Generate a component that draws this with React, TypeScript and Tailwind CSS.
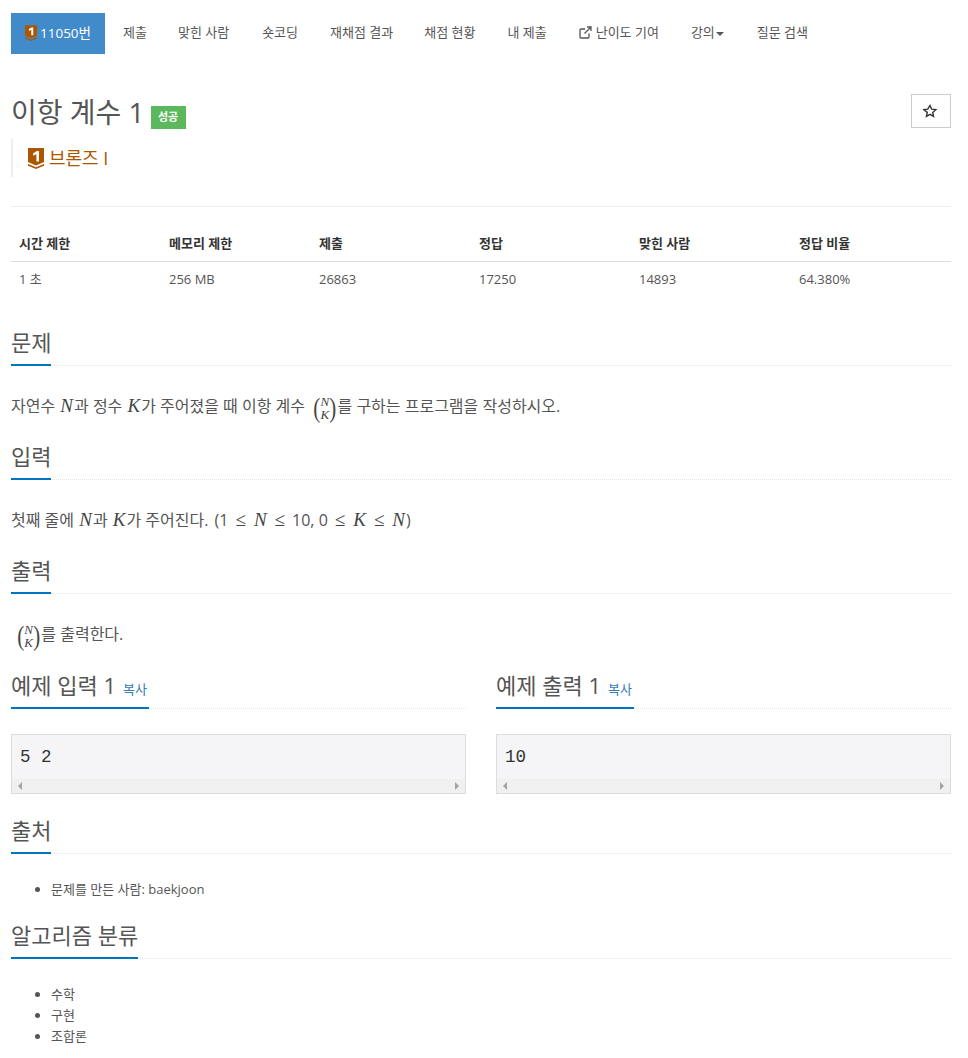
import React from "react";

const Shield = ({ w, h }: { w: number; h: number }) => (
  <svg width={w} height={h} viewBox="0 0 16 21" className="inline-block shrink-0">
    <path d="M0 0H16V14L8 17.6L0 14Z" fill="#ad5600" />
    <path d="M0 16L8 19.2L16 16V17.8L8 21L0 17.8Z" fill="#ad5600" />
    <path d="M5.2 5.2L8.8 3H11V13.6H8.4V6.2L5.2 7.8Z" fill="#fff" />
  </svg>
);

const Section = ({ title, suffix }: { title: string; suffix?: React.ReactNode }) => (
  <div className="border-b border-dotted border-[#e5e5e5] h-[44px] flex items-end">
    <h2 className="text-[22px] leading-[30px] text-[#555] border-b-2 border-[#0076c0] -mb-px pb-[7px] font-normal whitespace-nowrap">
      {title}
      {suffix}
    </h2>
  </div>
);

const I = ({ children }: { children: React.ReactNode }) => (
  <i className="font-['Liberation_Serif',serif] text-[19px] italic text-[#444] mx-[1px]">{children}</i>
);

const Le = () => (
  <span className="font-['Liberation_Serif',serif] text-[19px] text-[#444] mx-[7px]">≤</span>
);

const Binom = () => (
  <span className="inline-flex items-center align-middle font-['Liberation_Serif',serif] text-[#444] ml-[3px]">
    <span className="text-[28px] font-extralight leading-none scale-x-75 -mr-[1px]">(</span>
    <span className="flex flex-col items-center text-[13px] italic leading-[13px]">
      <span>N</span>
      <span>K</span>
    </span>
    <span className="text-[28px] font-extralight leading-none scale-x-75 -ml-[1px]">)</span>
  </span>
);

const Sample = ({ title, value }: { title: string; value: string }) => (
  <div className="flex-1 min-w-0">
    <Section title={title} suffix={<a className="text-[13px] leading-none text-[#337ab7] ml-[7px] pr-[2px]">복사</a>} />
    <div className="mt-[25px] border border-[#ddd] bg-[#f5f5f7] h-[60px] flex flex-col">
      <div className="flex-1 px-2 font-['Liberation_Mono',monospace] text-[17.5px] leading-[44px] text-[#333]">{value}</div>
      <div className="h-[17px] bg-[#f0f0f0] flex items-center justify-between px-[6px]">
        <span className="border-y-[4px] border-r-[4px] border-y-transparent border-r-[#a3a3a3]" />
        <span className="border-y-[4px] border-l-[4px] border-y-transparent border-l-[#a3a3a3]" />
      </div>
    </div>
  </div>
);

export default function App() {
  return (
    <div className="font-['Open_Sans','Noto_Sans_CJK_KR',sans-serif] text-[14px] text-[#555] bg-white pl-[11px] pr-[17px] pt-[13px] h-[1058px] overflow-hidden">
      <nav className="flex items-center h-[41px] text-[13px]">
        <a className="h-full w-[94px] bg-[#428bca] text-white flex items-center justify-center gap-[3px] text-[13.5px] pb-[1px]">
          <Shield w={12} h={16} />
          <span>11050번</span>
        </a>
        <a className="ml-[18px] pb-[2px]">제출</a>
        <a className="ml-[31px] pb-[2px]">맞힌 사람</a>
        <a className="ml-[33px] pb-[2px]">숏코딩</a>
        <a className="ml-[32px] pb-[2px]">재채점 결과</a>
        <a className="ml-[31px] pb-[2px]">채점 현황</a>
        <a className="ml-[32px] pb-[2px]">내 제출</a>
        <a className="ml-[32px] pb-[2px] flex items-center gap-[4px]">
          <svg width="13" height="13" viewBox="0 0 13 13" fill="none" stroke="#555" strokeWidth="1.3">
            <path d="M10 7.5V11a1 1 0 0 1-1 1H2a1 1 0 0 1-1-1V4a1 1 0 0 1 1-1h4" />
            <path d="M5.5 7.5L11.5 1.5M8 1h4v4" />
          </svg>
          난이도 기여
        </a>
        <a className="ml-[32px] pb-[2px] flex items-center">
          강의
          <span className="ml-[1px] mt-[2px] border-x-[4px] border-t-[4px] border-x-transparent border-t-[#555]" />
        </a>
        <a className="ml-[33px] pb-[2px]">질문 검색</a>
      </nav>

      <div className="flex items-start justify-between mt-[40px]">
        <div className="flex items-center h-[34px]">
          <h1 className="text-[28px] leading-[34px] mt-[2px] font-normal text-[#555]">이항 계수 1</h1>
          <span className="ml-[6px] mt-[12px] bg-[#5cb85c] text-white text-[11px] font-bold w-[35px] h-[23px] flex items-center justify-center">성공</span>
        </div>
        <button className="w-[40px] h-[34px] border border-[#ccc] flex items-center justify-center pr-[2px] text-[#333]">
          <svg width="14" height="14" viewBox="0 0 24 24" fill="none" stroke="#333" strokeWidth="2.4">
            <path d="M12 2.5l2.9 6.4 7 .8-5.2 4.7 1.4 6.9-6.1-3.5-6.1 3.5 1.4-6.9L1.1 9.7l7-.8z" />
          </svg>
        </button>
      </div>

      <div className="mt-[11px] h-[38px] border-l-2 border-[#eee] pl-[15px] flex items-center gap-[5px] text-[18px] text-[#ad5600]">
        <Shield w={16} h={21} />
        <span>브론즈 I</span>
      </div>

      <hr className="mt-[29px] border-[#eee]" />

      <table className="mt-[23px] w-full text-[13px] text-[#333] table-fixed">
        <thead>
          <tr className="border-b border-[#ddd] text-left h-[31px]">
            <th className="w-[150px] pl-2 pb-[4px] font-bold">시간 제한</th>
            <th className="w-[150px] pl-2 pb-[4px] font-bold">메모리 제한</th>
            <th className="w-[160px] pl-2 pb-[4px] font-bold">제출</th>
            <th className="w-[160px] pl-2 pb-[4px] font-bold">정답</th>
            <th className="w-[160px] pl-2 pb-[4px] font-bold">맞힌 사람</th>
            <th className="pl-2 pb-[4px] font-bold">정답 비율</th>
          </tr>
        </thead>
        <tbody>
          <tr className="h-[38px] text-[#555]">
            <td className="pl-2 pb-[2px]">1 초</td>
            <td className="pl-2 pb-[2px]">256 MB</td>
            <td className="pl-2 pb-[2px]">26863</td>
            <td className="pl-2 pb-[2px]">17250</td>
            <td className="pl-2 pb-[2px]">14893</td>
            <td className="pl-2 pb-[2px]">64.380%</td>
          </tr>
        </tbody>
      </table>

      <div className="mt-[23px]"><Section title="문제" /></div>
      <p className="mt-[24px] h-[32px] leading-[32px] text-[16px] text-[#555] whitespace-nowrap">
        자연수 <I>N</I>과 정수 <I>K</I>가 주어졌을 때 이항 계수 <Binom />를 구하는 프로그램을 작성하시오.
      </p>

      <div className="mt-[14px]"><Section title="입력" /></div>
      <p className="mt-[24px] h-[32px] leading-[32px] text-[16px] text-[#555] whitespace-nowrap">
        첫째 줄에 <I>N</I>과 <I>K</I>가 주어진다. <span className="ml-[2px]">(1</span><Le /><I>N</I><Le />10, 0<Le /><I>K</I><Le /><I>N</I>)
      </p>

      <div className="mt-[14px]"><Section title="출력" /></div>
      <p className="mt-[24px] h-[32px] leading-[32px] text-[16px] text-[#555] whitespace-nowrap pl-[2px]">
        <Binom />를 출력한다.
      </p>

      <div className="flex gap-[30px] mt-[15px]">
        <Sample title="예제 입력 1" value="5 2" />
        <Sample title="예제 출력 1" value="10" />
      </div>

      <div className="mt-[16px]"><Section title="출처" /></div>
      <ul className="mt-[25px] list-disc pl-[40px] text-[13px] text-[#555] leading-[21px]">
        <li>문제를 만든 사람: baekjoon</li>
      </ul>

      <div className="mt-[15px]"><Section title="알고리즘 분류" /></div>
      <ul className="mt-[25px] list-disc pl-[40px] text-[13px] text-[#555] leading-[21px]">
        <li>수학</li>
        <li>구현</li>
        <li>조합론</li>
      </ul>
    </div>
  );
}
